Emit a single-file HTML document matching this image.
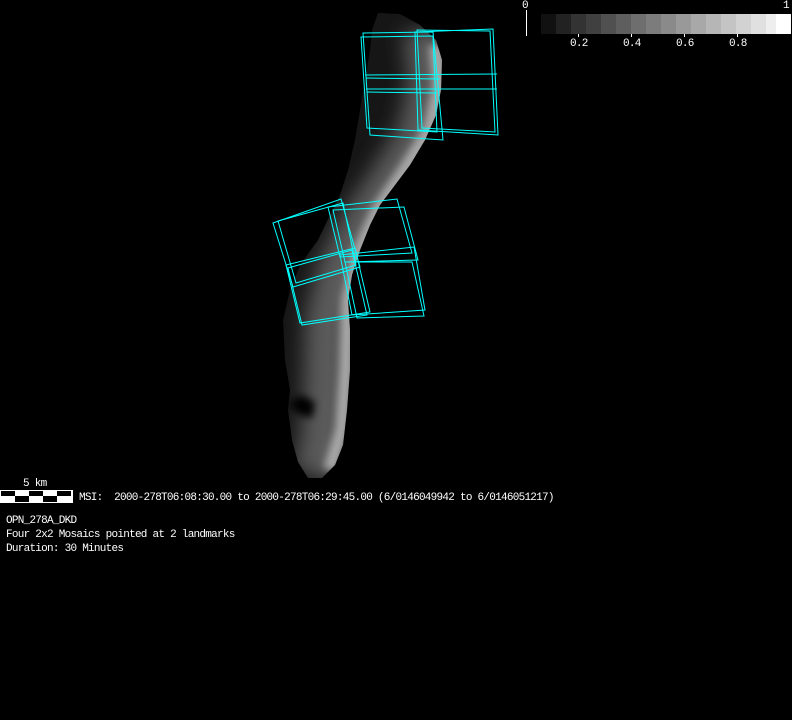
<!DOCTYPE html>
<html><head><meta charset="utf-8"><style>
html,body{margin:0;padding:0;background:#000;width:792px;height:720px;overflow:hidden}
.t{position:absolute;color:#fff;font-family:"Liberation Mono",monospace;font-size:11px;letter-spacing:-0.74px;white-space:pre;line-height:12px}
</style></head><body>
<svg width="792" height="720" style="position:absolute;left:0;top:0">
<defs>
<clipPath id="cb"><path d="M378 13 L400 14 L420 25 L436 40 L442 60 L441 90 L436 115 L425 140 L410 165 L395 185 L380 205 L370 225 L360 250 L352 275 L348 300 L350 330 L350 370 L347 410 L343 445 L335 465 L322 478 L308 478 L298 462 L292 440 L288 410 L290 390 L285 360 L283 320 L290 290 L300 265 L318 240 L330 215 L340 195 L348 170 L355 140 L360 110 L365 80 L370 50 L372 30 Z"/></clipPath>
<filter id="bl" x="-50%" y="-50%" width="200%" height="200%"><feGaussianBlur stdDeviation="10"/></filter>
<filter id="bl2" x="-50%" y="-50%" width="200%" height="200%"><feGaussianBlur stdDeviation="4"/></filter>
</defs>
<g clip-path="url(#cb)">
<rect x="270" y="0" width="200" height="490" fill="#161616"/>
<path d="M425 30 L432 80 L420 135 L392 180 L362 225 L340 270 L328 320 L326 400 L322 450 L312 475" fill="none" stroke="#5a5a5a" stroke-width="45" filter="url(#bl)"/>
<path d="M436 45 L440 85 L430 130 L405 170 L378 210 L360 250 L348 300 L346 370 L342 430 L330 470" fill="none" stroke="#a8a8a8" stroke-width="14" filter="url(#bl2)"/>
<path d="M288 405 L300 395 L315 402 L312 418 L300 415 Z" fill="#050505" filter="url(#bl2)"/>
</g>
<g fill="none" stroke="#00ffff" stroke-width="1">
<polygon points="361,37 433,36 437,132 367,128"/>
<polygon points="363,33 433,32 443,140 370,135"/>
<polygon points="415,32 493,29 498,135 418,130"/>
<polygon points="417,30 490,31 495,132 422,128"/>
<line x1="365" y1="75" x2="497" y2="74"/>
<line x1="366" y1="78" x2="440" y2="79"/>
<line x1="366" y1="89" x2="497" y2="89"/>
<line x1="367" y1="92" x2="437" y2="93"/>
<polygon points="273,223 341,199 360,267 293,287"/>
<polygon points="278,221 343,203 356,265 296,283"/>
<polygon points="286,265 355,248 370,312 300,323"/>
<polygon points="288,268 352,250 367,315 302,325"/>
<polygon points="328,207 397,199 412,253 340,257"/>
<polygon points="333,210 404,207 418,260 345,262"/>
<polygon points="340,255 414,247 425,310 352,315"/>
<polygon points="345,262 412,262 424,316 357,318"/>
</g>
<g>
<rect x="541" y="14" width="15" height="20" fill="#111"/><rect x="556" y="14" width="15" height="20" fill="#222"/><rect x="571" y="14" width="15" height="20" fill="#333"/><rect x="586" y="14" width="15" height="20" fill="#404040"/><rect x="601" y="14" width="15" height="20" fill="#505050"/><rect x="616" y="14" width="15" height="20" fill="#5e5e5e"/><rect x="631" y="14" width="15" height="20" fill="#6e6e6e"/><rect x="646" y="14" width="15" height="20" fill="#7c7c7c"/><rect x="661" y="14" width="15" height="20" fill="#8a8a8a"/><rect x="676" y="14" width="15" height="20" fill="#999"/><rect x="691" y="14" width="15" height="20" fill="#a8a8a8"/><rect x="706" y="14" width="15" height="20" fill="#b6b6b6"/><rect x="721" y="14" width="15" height="20" fill="#c4c4c4"/><rect x="736" y="14" width="15" height="20" fill="#d2d2d2"/><rect x="751" y="14" width="15" height="20" fill="#e0e0e0"/><rect x="766" y="14" width="10" height="20" fill="#eee"/><rect x="776" y="14" width="15" height="20" fill="#fff"/>
<line x1="526.5" y1="10" x2="526.5" y2="36" stroke="#fff"/>
<line x1="578.5" y1="34" x2="578.5" y2="37" stroke="#fff"/>
<line x1="631.5" y1="34" x2="631.5" y2="37" stroke="#fff"/>
<line x1="684.5" y1="34" x2="684.5" y2="37" stroke="#fff"/>
<line x1="737.5" y1="34" x2="737.5" y2="37" stroke="#fff"/>
</g>
<rect x="0" y="490" width="73" height="13" fill="#fff"/>
<rect x="1" y="491" width="14" height="5" fill="#000"/>
<rect x="29" y="491" width="14" height="5" fill="#000"/>
<rect x="57" y="491" width="14" height="5" fill="#000"/>
<rect x="15" y="496" width="14" height="6" fill="#000"/>
<rect x="43" y="496" width="14" height="6" fill="#000"/>
</svg>
<div class="t" style="left:522px;top:0px">0</div>
<div class="t" style="left:783px;top:0px">1</div>
<div class="t" style="left:570px;top:38px">0.2</div>
<div class="t" style="left:623px;top:38px">0.4</div>
<div class="t" style="left:676px;top:38px">0.6</div>
<div class="t" style="left:729px;top:38px">0.8</div>
<div class="t" style="left:23px;top:478px">5 km</div>
<div class="t" style="left:79px;top:492px">MSI:  2000-278T06:08:30.00 to 2000-278T06:29:45.00 (6/0146049942 to 6/0146051217)</div>
<div class="t" style="left:6px;top:515px">OPN_278A_DKD</div>
<div class="t" style="left:6px;top:529px">Four 2x2 Mosaics pointed at 2 landmarks</div>
<div class="t" style="left:6px;top:543px">Duration: 30 Minutes</div>
</body></html>
